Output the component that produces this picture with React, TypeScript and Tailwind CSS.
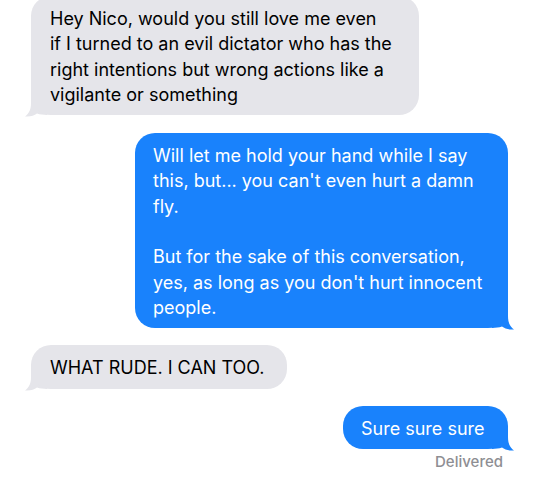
import React from 'react';

const BLUE = '#1982fc';
const GRAY = '#e5e5ea';

function Tail({ side, color }: { side: 'left' | 'right'; color: string }) {
  const pos = side === 'right' ? 'right-[-6px]' : 'left-[-6px] -scale-x-100';
  return (
    <svg
      className={`absolute bottom-[-2px] w-[22px] h-[22px] ${pos}`}
      viewBox="0 0 22 22"
      aria-hidden
    >
      <path
        d="M0 0 H16 V8 C16 14 17.5 18 22 21.5 C17 22 13 20.8 10 18.6 C7 19.6 4 20 0 20 Z"
        fill={color}
      />
    </svg>
  );
}

function Received({ lines, width, className = '' }: { lines: string[]; width: string; className?: string }) {
  return (
    <div className={`relative self-start ml-[31px] ${width} ${className}`}>
      <div className="relative z-10 rounded-[20px] bg-[#e5e5ea] pl-[19px] pr-3 pt-[10px] pb-[8px] text-black">
        {lines.map((l, i) => (
          <div key={i} className="whitespace-nowrap">{l}</div>
        ))}
      </div>
      <Tail side="left" color={GRAY} />
    </div>
  );
}

function Sent({ lines, width, className = '' }: { lines: string[]; width: string; className?: string }) {
  return (
    <div className={`relative self-end mr-[32px] ${width} ${className}`}>
      <div className="relative z-10 rounded-[20px] bg-[#1982fc] pl-[18px] pr-3 pt-[10px] pb-[8px] text-white">
        {lines.map((l, i) => (
          <div key={i} className="whitespace-nowrap">{l === '' ? '\u00a0' : l}</div>
        ))}
      </div>
      <Tail side="right" color={BLUE} />
    </div>
  );
}

export default function App() {
  return (
    <div className="w-[540px] h-[479px] overflow-hidden bg-white font-['Inter','Liberation_Sans',sans-serif] text-[18px] leading-[25.3px]">
      <div className="flex flex-col -mt-[4px]">
        <Received
          width="w-[388px]"
          lines={[
            'Hey Nico, would you still love me even',
            'if I turned to an evil dictator who has the',
            'right intentions but wrong actions like a',
            'vigilante or something',
          ]}
        />
        <Sent
          width="w-[373px]"
          className="mt-[18px]"
          lines={[
            'Will let me hold your hand while I say',
            "this, but... you can't even hurt a damn",
            'fly.',
            '',
            'But for the sake of this conversation,',
            "yes, as long as you don't hurt innocent",
            'people.',
          ]}
        />
        <Received width="w-[256px]" className="mt-[17px]" lines={['WHAT RUDE. I CAN TOO.']} />
        <Sent width="w-[165px]" className="mt-[17px]" lines={['Sure sure sure']} />
        <div className="self-end mr-[37px] mt-[4px] text-[15px] leading-[18px] font-medium text-[#8e8e93]">
          Delivered
        </div>
      </div>
    </div>
  );
}
